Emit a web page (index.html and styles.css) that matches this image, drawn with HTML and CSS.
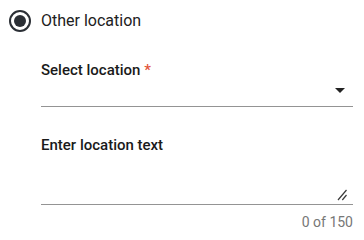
FILE: index.html
```html
<!DOCTYPE html>
<html>
<head>
<meta charset="utf-8">
<link rel="stylesheet" href="styles.css">
</head>
<body>
<div class="page">
  <label class="radio-row">
    <span class="radio"><span class="dot"></span></span>
    <span class="radio-label">Other location</span>
  </label>
  <div class="fields">
    <div class="field select-field">
      <div class="label">Select location <span class="req">*</span></div>
      <div class="control">
        <span class="value"></span>
        <span class="arrow"></span>
      </div>
    </div>
    <div class="field text-field">
      <div class="label">Enter location text</div>
      <div class="control textarea">
        <svg class="resize" width="10" height="12" viewBox="0 0 10 12">
          <path d="M9.5 1 L1 11 M9.5 6 L5.3 11" stroke="#3a3a3a" stroke-width="1.2" fill="none"/>
        </svg>
      </div>
      <div class="hint">0 of 150</div>
    </div>
  </div>
</div>
</body>
</html>
```

FILE: styles.css
```css
html, body {
  margin: 0;
  padding: 0;
  background: #fff;
}
body {
  font-family: Roboto, "Noto Sans", sans-serif;
  color: #212121;
}
.page {
  width: 364px;
  height: 229px;
  overflow: hidden;
}
.radio-row {
  display: flex;
  align-items: center;
  height: 41px;
  padding-left: 9px;
  gap: 10px;
}
.radio {
  box-sizing: border-box;
  width: 22px;
  height: 22px;
  border: 2px solid #2b2f35;
  border-radius: 50%;
  display: flex;
  align-items: center;
  justify-content: center;
}
.dot {
  width: 12px;
  height: 12px;
  border-radius: 50%;
  background: #2b2f35;
}
.radio-label {
  font-size: 16px;
  color: #212121;
}
.fields {
  margin-left: 41px;
  width: 312px;
  display: flex;
  flex-direction: column;
}
.label {
  font-size: 15px;
  font-weight: 500;
  line-height: 20px;
  color: #1a1a1a;
}
.req {
  color: #e2553b;
}
.select-field {
  margin-top: 19px;
}
.control {
  border-bottom: 1px solid #949494;
  display: flex;
  align-items: flex-end;
  justify-content: flex-end;
}
.select-field .control {
  height: 26px;
}
.arrow {
  width: 0;
  height: 0;
  border-left: 5px solid transparent;
  border-right: 5px solid transparent;
  border-top: 5px solid #222;
  margin: 0 8px 13px 0;
}
.text-field {
  margin-top: 28px;
}
.textarea {
  height: 49px;
}
.resize {
  margin: 0 6px 3px 0;
}
.hint {
  text-align: right;
  font-size: 14px;
  line-height: 14px;
  color: #777;
  margin-top: 10px;
}
```
